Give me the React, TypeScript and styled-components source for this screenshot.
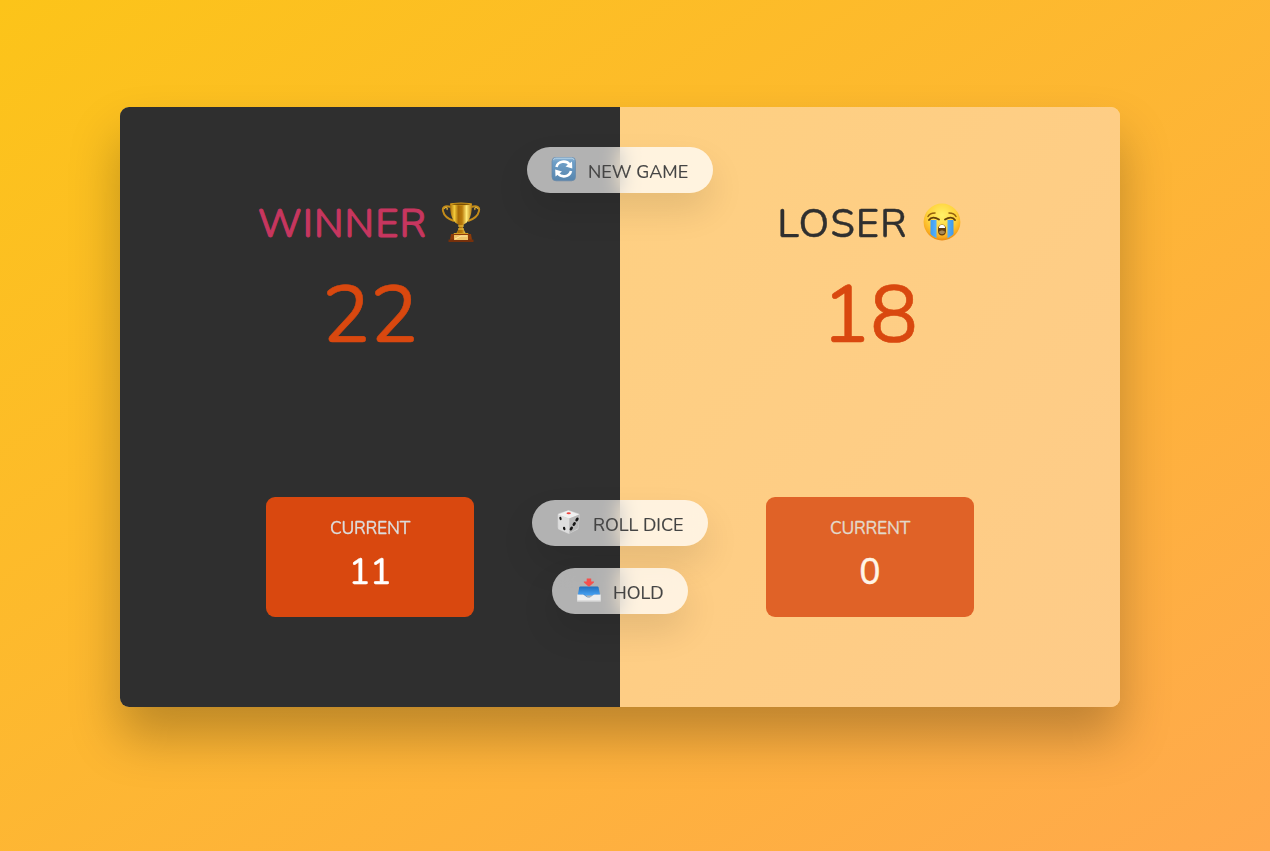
import React from 'react';
import styled, { createGlobalStyle } from 'styled-components';

const GlobalStyle = createGlobalStyle`
  *, *::before, *::after { margin: 0; padding: 0; box-sizing: border-box; }
  html, body { height: 100%; }
  body {
    font-family: Nunito, Lato, sans-serif;
    color: #2f2f2f;
    background: linear-gradient(to top left, #ffa94d 0%, #fcc419 100%) no-repeat fixed;
    overflow: hidden;
  }
`;

const Page = styled.div`
  display: flex;
  padding: 107px 0 0 120px;
`;

const Board = styled.main`
  position: relative;
  display: flex;
  width: 1000px;
  height: 600px;
  border-radius: 9px;
  overflow: hidden;
  background: rgba(255, 255, 255, 0.35);
  backdrop-filter: blur(200px);
  box-shadow: 0 30px 50px rgba(0, 0, 0, 0.25);
`;

const Player = styled.section<{ $winner?: boolean }>`
  flex: 1;
  display: flex;
  flex-direction: column;
  align-items: center;
  padding: 90px;
  background: ${p => (p.$winner ? '#2f2f2f' : 'linear-gradient(to top left, #fecb88, #fed082)')};
`;

const Name = styled.h2<{ $winner?: boolean }>`
  display: flex;
  align-items: center;
  gap: 15px;
  height: 54px;
  font-size: 40px;
  font-weight: 400;
  line-height: 54px;
  letter-spacing: 1px;
  white-space: nowrap;
  color: ${p => (p.$winner ? '#c7365f' : '#2f2f2f')};
  -webkit-text-stroke: ${p => (p.$winner ? '0.9px' : '0.4px')} currentColor;

  svg { display: block; margin: -5px 1px 0 -1px; }
`;

const Score = styled.p`
  height: 109px;
  margin-top: 10px;
  font-size: 80px;
  line-height: 109px;
  letter-spacing: 0;
  color: #d9480f;
  -webkit-text-stroke: 0.6px currentColor;
`;

const Current = styled.div<{ $winner?: boolean }>`
  display: flex;
  flex-direction: column;
  align-items: center;
  width: 208px;
  height: 120px;
  margin-top: auto;
  padding-top: 19px;
  border-radius: 9px;
  background: #d9480f;
  opacity: ${p => (p.$winner ? 1 : 0.8)};
  color: #fff;
`;

const CurrentLabel = styled.p`
  font-size: 17.5px;
  line-height: 24px;
  letter-spacing: -0.25px;
  color: #ddd;
  -webkit-text-stroke: 0.3px currentColor;
`;

const CurrentScore = styled.p`
  margin-top: 9px;
  font-size: 35.5px;
  line-height: 48px;
  font-weight: 500;
  -webkit-text-stroke: 0.3px currentColor;
`;

const Button = styled.button<{ $top: number; $width: number }>`
  position: absolute;
  top: ${p => p.$top}px;
  left: 50%;
  transform: translateX(-50%);
  display: flex;
  align-items: center;
  gap: 12px;
  width: ${p => p.$width}px;
  height: 46px;
  padding: 0 24px;
  border: none;
  border-radius: 500px;
  font-family: inherit;
  font-size: 18px;
  line-height: 46px;
  white-space: nowrap;
  color: #444;
  background: linear-gradient(90deg, rgba(255, 255, 255, 0.63) 50%, rgba(255, 255, 255, 0.74) 50%);
  backdrop-filter: blur(10px);
  box-shadow: 0 17.5px 35px rgba(0, 0, 0, 0.1);
  cursor: pointer;

  svg { flex: none; margin-top: -2px; }
  span { padding-top: 3px; -webkit-text-stroke: 0.15px currentColor; }
`;

const Trophy = () => (
  <svg width="40" height="40" viewBox="0 0 40 40">
    <defs>
      <linearGradient id="cup" x1="0" x2="1">
        <stop offset="0" stopColor="#a76c08" />
        <stop offset=".2" stopColor="#f3ca3a" />
        <stop offset=".38" stopColor="#a66b08" />
        <stop offset=".55" stopColor="#ba7b0b" />
        <stop offset=".75" stopColor="#ffe875" />
        <stop offset="1" stopColor="#b67a0c" />
      </linearGradient>
    </defs>
    <g stroke="none">
      <path d="M10 5C4 3 1 5 2 9c1 5 5 8 11 10M30 5c6-2 9 0 8 4-1 5-5 8-11 10" fill="none" stroke="#c48c19" strokeWidth="1.9" />
      <path d="M3 7c2-3 4-1 3 1M37 7c-2-3-4-1-3 1" fill="none" stroke="#dcae38" strokeWidth="1.2" />
      <path d="M9 1.500h22c0 9-1.500 17.500-7.500 20.500-2 1-2 3-1 5l2 4h-9l2-4c1-2 1-4-1-5C10.500 19 9 10.500 9 1.500Z" fill="url(#cup)" />
      <ellipse cx="20" cy="2" rx="11" ry="1.400" fill="#d29a1b" />
      <ellipse cx="20" cy="2.300" rx="9" ry=".7" fill="#795005" />
      <path d="M17 24h6M17 27h6" stroke="#f4cb45" strokeWidth="1" />
      <path d="M13 31h14l1 2H12Z" fill="#d69d22" />
      <path d="M10 32h20l1 6H9Z" fill="#8d3b09" />
      <path d="M7.500 37.500h25V40h-25Z" fill="#76300b" />
      <path d="M13 33h14v5H13Z" fill="#efc469" />
      <path d="m14 37 6-3h6" fill="none" stroke="#ffe7a2" strokeWidth="1" />
    </g>
  </svg>
);

const CryingFace = () => (
  <svg width="40" height="40" viewBox="0 0 40 40">
    <defs>
      <radialGradient id="face" cx=".5" cy=".32" r=".7">
        <stop offset="0" stopColor="#fff168" />
        <stop offset=".55" stopColor="#ffd33d" />
        <stop offset=".85" stopColor="#f9a91d" />
        <stop offset="1" stopColor="#e6800c" />
      </radialGradient>
      <linearGradient id="tear" x1="0" x2="1">
        <stop offset="0" stopColor="#3d9df2" />
        <stop offset=".5" stopColor="#70c4ff" />
        <stop offset="1" stopColor="#3c98ed" />
      </linearGradient>
    </defs>
    <circle cx="20" cy="20" r="18.400" fill="url(#face)" />
    <path d="M8.500 18h6v18.200c-2.500-1-4.500-2.500-6-4.200ZM25.500 18h6v14c-1.500 1.700-3.500 3.200-6 4.200Z" fill="url(#tear)" />
    <path d="M7 18c2-3 6-3 10-.5M23 17.500c4-2.500 8-2.500 10 .5" fill="none" stroke="#65400b" strokeWidth="1.900" strokeLinecap="round" />
    <path d="M6 14.500c1-2 4-3.500 7-3.500M27 11c3 0 6 1.500 7 3.500" fill="none" stroke="#93600d" strokeWidth="1.500" strokeLinecap="round" />
    <path d="M16 27c0-6 8-6 8 0v2c0 6-8 6-8 0Z" fill="#633e12" />
    <path d="M17 25c1-3 5-3 6 0v1h-6Z" fill="#fff" />
    <path d="M17 30c1-2 5-2 6 0-1 3-5 3-6 0Z" fill="#a98954" />
  </svg>
);

const RefreshIcon = () => (
  <svg width="25" height="25" viewBox="-.5 .5 25 25">
    <defs>
      <linearGradient id="tile" x2="0" y2="1">
        <stop offset="0" stopColor="#91b7d5" />
        <stop offset=".2" stopColor="#6f9fc7" />
        <stop offset="1" stopColor="#5685ae" />
      </linearGradient>
    </defs>
    <rect x=".5" y=".8" width="23.500" height="23.500" rx="4" fill="url(#tile)" stroke="#6888a8" strokeWidth=".7" />
    <path d="M2 3.500Q2.500 1.700 4 1.700h16.500q1.500 0 2 1.800" fill="none" stroke="#b5d2e7" />
    <path d="M5 10.500c1.500-6 9.500-7 13-2.500M19.500 14.500c-1.500 6-9.500 7-13 2.500" fill="none" stroke="#fff" strokeWidth="2.600" />
    <path d="m20.500 5 .3 7-6.800-2ZM4 20l-.3-7 6.800 2Z" fill="#fff" />
  </svg>
);

const DiceIcon = () => (
  <svg width="25" height="25" viewBox=".3 .5 25 25">
    <path d="M2 5Q2 4 4 3.500L12 1q1-.3 2 0l9 3q1 .5 1 2l-1 12q0 1-1 2l-8 4q-1 .4-2 0l-9-4q-1-.5-1-2Z" fill="#d4d4d4" />
    <path d="m2.500 5 10-4 11 4-10 4Z" fill="#f1f1f1" />
    <path d="m13.500 9 10.200-4-1 13.500-9.200 5.500Z" fill="#b9b9b9" />
    <path d="m2.300 5.500 11.200 3.700V24L3 19.500Z" fill="#dedede" />
    <ellipse cx="13" cy="3.800" rx="2.200" ry="1" fill="#f04640" />
    <g fill="#161616">
      <ellipse cx="4.800" cy="9" rx="1.100" ry="1.700" transform="rotate(-15 4.800 9)" />
      <ellipse cx="8.500" cy="19" rx="1.200" ry="1.800" transform="rotate(-15 8.500 19)" />
      <ellipse cx="21.300" cy="10" rx="1.400" ry="2.100" transform="rotate(35 21.300 10)" />
      <ellipse cx="18.500" cy="14.500" rx="1.400" ry="2.100" transform="rotate(35 18.500 14.500)" />
      <ellipse cx="15.600" cy="19" rx="1.400" ry="2.100" transform="rotate(35 15.600 19)" />
    </g>
  </svg>
);

const InboxIcon = () => (
  <svg width="25" height="25" viewBox="-.7 .5 25 25">
    <defs>
      <linearGradient id="tray" x2="0" y2="1">
        <stop offset="0" stopColor="#2270bd" />
        <stop offset="1" stopColor="#48a3f5" />
      </linearGradient>
    </defs>
    <path d="M2.500 10q.2-1 1.200-1h17q1 0 1.200 1l1.600 8H1Z" fill="url(#tray)" />
    <path d="M1.500 17q3-1 6 0l3 2.500h4l3-2.500q3-1 6 0l-1 3h-20Z" fill="#2878cb" />
    <path d="M.5 17H6q1 0 2 1l2 1.500q2 1 4 0l2-1.500q1-1 2-1h6v7H.5Z" fill="#eee" />
    <path d="M.5 23.500h23.500" stroke="#ccc" />
    <path d="M10 .9h4.500V4H17q.8.200.2 1l-4.300 3.700q-.7.500-1.400 0L7.300 5q-.7-.8.200-1H10Z" fill="#f5504d" />
  </svg>
);

export default function App() {
  return (
    <>
      <GlobalStyle />
      <Page>
        <Board>
          <Player $winner>
            <Name $winner><span>WINNER</span><Trophy /></Name>
            <Score>22</Score>
            <Current $winner>
              <CurrentLabel>CURRENT</CurrentLabel>
              <CurrentScore>11</CurrentScore>
            </Current>
          </Player>
          <Player>
            <Name><span>LOSER</span><CryingFace /></Name>
            <Score>18</Score>
            <Current>
              <CurrentLabel>CURRENT</CurrentLabel>
              <CurrentScore>0</CurrentScore>
            </Current>
          </Player>
          <Button $top={40} $width={186}><RefreshIcon /><span>NEW GAME</span></Button>
          <Button $top={393} $width={176}><DiceIcon /><span>ROLL DICE</span></Button>
          <Button $top={461} $width={136}><InboxIcon /><span>HOLD</span></Button>
        </Board>
      </Page>
    </>
  );
}
